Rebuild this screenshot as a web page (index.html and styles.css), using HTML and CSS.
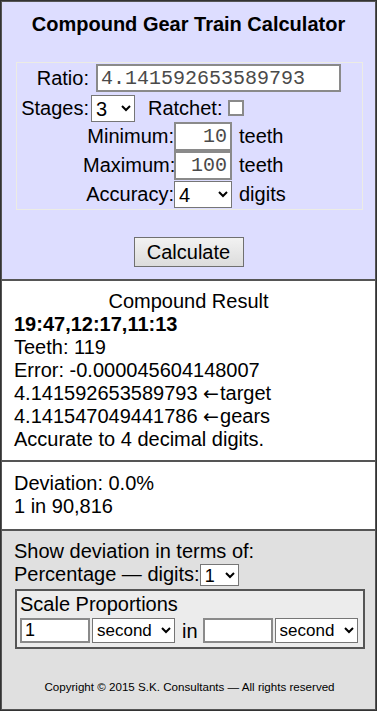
FILE: index.html
```html
<!DOCTYPE html>
<html lang="en">
<head>
    <meta charset="UTF-8">
    <meta name="viewport" content="width=device-width, initial-scale=1.0">
    <title>Compound Gear Train Calculator</title>
    <link rel="stylesheet" href="styles.css">
</head>
<body>
    <div class="calc">
        <section class="panel panel-input">
            <h1>Compound Gear Train Calculator</h1>

            <div class="settings">
                <div class="row-top">
                    <label class="lbl" for="ratio">Ratio:</label>
                    <input type="text" id="ratio" class="mono ratio" value="4.141592653589793">
                </div>
                <div class="row-top">
                    <label class="lbl" for="stages">Stages:</label>
                    <select id="stages" class="sel-stages"><option>3</option></select>
                    <label class="ratchet" for="ratchet">Ratchet:</label>
                    <input type="checkbox" id="ratchet" class="check">
                </div>
                <div class="limits">
                    <label for="minT">Minimum:</label>
                    <input type="text" id="minT" class="mono num" value="10">
                    <span class="unit">teeth</span>

                    <label for="maxT">Maximum:</label>
                    <input type="text" id="maxT" class="mono num" value="100">
                    <span class="unit">teeth</span>

                    <label for="acc">Accuracy:</label>
                    <select id="acc" class="sel-acc"><option>4</option></select>
                    <span class="unit">digits</span>
                </div>
            </div>

            <div class="actions">
                <button type="button">Calculate</button>
            </div>
        </section>

        <section class="panel panel-result">
            <div class="result-title">Compound Result</div>
            <div class="result-gears">19:47,12:17,11:13</div>
            <div>Teeth: 119</div>
            <div>Error: -0.000045604148007</div>
            <div>4.141592653589793 <span class="arrow">&larr;</span>target</div>
            <div>4.141547049441786 <span class="arrow">&larr;</span>gears</div>
            <div>Accurate to 4 decimal digits.</div>
        </section>

        <section class="panel panel-deviation">
            <div>Deviation: 0.0%</div>
            <div>1 in 90,816</div>
        </section>

        <section class="panel panel-options">
            <div>Show deviation in terms of:</div>
            <div>Percentage &mdash; digits:<select class="sel-digits"><option>1</option></select></div>

            <div class="scale">
                <div class="scale-title">Scale Proportions</div>
                <div class="scale-row">
                    <input type="text" class="scale-in" value="1">
                    <select class="sel-unit"><option>second</option></select>
                    <span class="scale-word">in</span>
                    <input type="text" class="scale-in" value="">
                    <select class="sel-unit"><option>second</option></select>
                </div>
            </div>

            <p class="copyright">Copyright &copy; 2015 S.K. Consultants &mdash; All rights reserved</p>
        </section>
    </div>
</body>
</html>
```

FILE: styles.css
```css
body {
    margin: 0;
    font-family: "Liberation Sans", Arial, sans-serif;
    font-size: 20px;
    line-height: 23px;
    color: #000;
    background: #fff;
}

.calc {
    width: 375px;
    border: 1px solid #333;
}

.panel {
    border: 1px solid #555;
}

/* pannello di input */
.panel-input {
    background-color: #ddddff;
    padding: 11px 0 12px;
}

h1 {
    margin: 0;
    font-size: 20px;
    line-height: 23px;
    text-align: center;
}

.settings {
    margin: 26px 12px 0 14px;
    padding-top: 1px;
    border: 1px solid #ecece4;
}

.row-top {
    display: flex;
    align-items: center;
}

.row-top + .row-top {
    margin-top: 3px;
}

.lbl {
    width: 72px;
    text-align: right;
}

input[type="text"] {
    box-sizing: border-box;
    border: 2px solid #8a8a8a;
    background: #fff;
}

.mono {
    font-family: "Liberation Mono", "Courier New", monospace;
    font-size: 20px;
    color: #4a4a4a;
}

input.ratio {
    width: 245px;
    height: 28px;
    margin: 0 0 0 7px;
    padding: 0 3px;
}

select {
    box-sizing: border-box;
    font-family: "Liberation Sans", Arial, sans-serif;
    font-size: 20px;
    color: #000;
    background: #fff;
    border: 1px solid #767676;
    border-radius: 0;
    margin: 0;
}

select.sel-stages {
    width: 44px;
    height: 27px;
    margin-left: 2px;
}

.ratchet {
    margin-left: 13px;
}

.check {
    appearance: none;
    box-sizing: border-box;
    width: 16px;
    height: 16px;
    margin: 0 0 2px 6px;
    border: 2px solid #8a8a8a;
    background: #fff;
}

.limits {
    display: grid;
    grid-template-columns: 91px 58px auto;
    grid-auto-rows: 29px;
    align-items: center;
    margin-left: 66px;
}

.limits label {
    text-align: right;
}

input.num {
    width: 58px;
    height: 29px;
    margin: 0;
    padding: 0 3px;
    text-align: right;
}

.sel-acc {
    width: 58px;
    height: 27px;
}

.unit {
    margin-left: 7px;
}

.actions {
    margin-top: 27px;
    text-align: center;
}

.actions button {
    width: 110px;
    height: 30px;
    font-family: "Liberation Sans", Arial, sans-serif;
    font-size: 20px;
    color: #000;
    border: 1px solid #707070;
    border-radius: 0;
    background: linear-gradient(#f2f2f2, #dcdcdc);
    padding: 0;
}

/* risultati */
.panel-result {
    background-color: #fff;
    padding: 9px 12px;
}

.result-title {
    text-align: center;
}

.result-gears {
    font-weight: bold;
}

.arrow {
    font-family: "DejaVu Sans", sans-serif;
    font-size: 19px;
    letter-spacing: 1px;
}

.panel-deviation {
    background-color: #fff;
    padding: 10px 12px 11px;
}

/* opzioni */
.panel-options {
    background-color: #e0e0e0;
    padding: 9px 10px 15px 12px;
}

select.sel-digits {
    width: 39px;
    height: 22px;
    font-size: 18px;
    vertical-align: top;
    margin-top: 1px;
}

.scale {
    margin: 3px 0 0 1px;
    border: 2px solid #555;
    background-color: #ececec;
    padding: 2px 3px 4px;
}

.scale-row {
    display: flex;
    align-items: center;
    margin-top: 2px;
}

input.scale-in {
    width: 70px;
    height: 25px;
    margin: 0;
    font-family: "Liberation Sans", Arial, sans-serif;
    font-size: 18px;
    padding: 0 3px;
}

select.sel-unit {
    width: 83px;
    height: 25px;
    font-size: 17px;
    margin-left: 2px;
}

.scale-word {
    margin: 0 5px 0 7px;
    line-height: 20px;
}

.copyright {
    margin: 31px 0 0;
    font-size: 11.6px;
    line-height: 14px;
    text-align: center;
}
```
